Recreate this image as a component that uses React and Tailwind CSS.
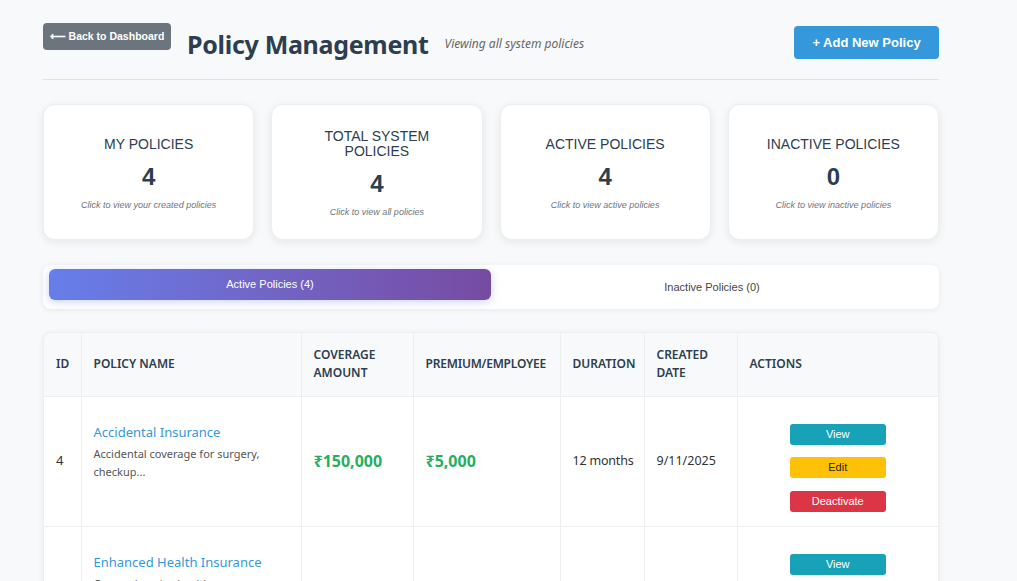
const segoe = { fontFamily: '"Noto Sans", "Open Sans", sans-serif' };

const stats = [
  { label: "MY POLICIES", value: 4, hint: "Click to view your created policies" },
  { label: "TOTAL SYSTEM POLICIES", value: 4, hint: "Click to view all policies" },
  { label: "ACTIVE POLICIES", value: 4, hint: "Click to view active policies" },
  { label: "INACTIVE POLICIES", value: 0, hint: "Click to view inactive policies" },
];

const policies = [
  {
    id: 4,
    name: "Accidental Insurance",
    desc: "Accidental coverage for surgery, checkup...",
    coverage: "₹150,000",
    premium: "₹5,000",
    duration: "12 months",
    created: "9/11/2025",
  },
  {
    id: 3,
    name: "Enhanced Health Insurance",
    desc: "Comprehensive health coverage for employees...",
    coverage: "₹300,000",
    premium: "₹8,000",
    duration: "12 months",
    created: "9/11/2025",
  },
];

export default function App() {
  return (
    <div className="min-h-screen bg-[#f8f9fa] font-['Liberation_Sans',Arial,sans-serif]">
      <div className="w-[896px] ml-[43px] pt-[23px]">
        {/* HEADER */}
        <div className="flex h-[57px] items-start justify-between border-b border-[#dee2e6]">
          <div className="flex h-[42px] items-center">
            <button className="h-[27px] w-[128px] self-start rounded bg-[#6c757d] text-[10.5px] font-semibold text-white">
              ⟵ Back to Dashboard
            </button>
            <h1 style={segoe} className="ml-4 text-[25px] font-bold leading-none tracking-[-0.3px] text-[#2c3e50]">
              Policy Management
            </h1>
            <span style={segoe} className="ml-4 text-[12px] italic text-[#666]">
              Viewing all system policies
            </span>
          </div>
          <button className="mt-[3px] h-[33px] w-[145px] rounded bg-[#3498db] text-[13px] font-bold text-white">
            + Add New Policy
          </button>
        </div>

        {/* STAT CARDS */}
        <div className="mt-[24px] grid grid-cols-4 gap-[17px]">
          {stats.map((s) => (
            <div
              key={s.label}
              className="flex h-[136px] flex-col items-center justify-center rounded-xl border border-[#eceef0] bg-white px-8 pt-[5px] text-center shadow-[0_2px_10px_rgba(0,0,0,0.08)]"
            >
              <div className="text-[14px] leading-[15px] text-[#2c3e50]">{s.label}</div>
              <div className="mt-[13px] text-[24px] font-bold leading-none text-[#2c3e50]">{s.value}</div>
              <div className="mt-[10px] text-[9px] italic text-[#6c757d]">{s.hint}</div>
            </div>
          ))}
        </div>

        {/* TABS */}
        <div className="mt-[25px] flex h-[44px] items-start rounded-lg bg-white p-[4px] px-[6px] shadow-[0_1px_6px_rgba(0,0,0,0.07)]">
          <div className="flex h-[31px] flex-1 items-center justify-center rounded-md bg-gradient-to-r from-[#667eea] to-[#764ba2] text-[11px] font-medium text-white shadow-[0_2px_8px_rgba(102,126,234,0.35)]">
            Active Policies (4)
          </div>
          <div className="flex h-[36px] flex-1 items-center justify-center text-[11px] text-[#444]">
            Inactive Policies (0)
          </div>
        </div>

        {/* TABLE */}
        <div className="mt-[23px] overflow-hidden rounded-t-lg border border-[#eceef0] bg-white shadow-[0_1px_6px_rgba(0,0,0,0.06)]">
          <table style={segoe} className="w-full table-fixed border-collapse text-left">
            <colgroup>
              <col className="w-[37px]" />
              <col className="w-[220px]" />
              <col className="w-[112px]" />
              <col className="w-[147px]" />
              <col className="w-[84px]" />
              <col className="w-[93px]" />
              <col />
            </colgroup>
            <thead>
              <tr className="h-[63px] bg-[#f8f9fa] text-[12px] uppercase leading-[18px] text-[#2c3e50]">
                <th className="border-b border-r border-[#eceef0] px-3 font-semibold">ID</th>
                <th className="border-b border-r border-[#eceef0] px-3 font-semibold">Policy Name</th>
                <th className="border-b border-r border-[#eceef0] px-3 font-semibold">Coverage Amount</th>
                <th className="border-b border-r border-[#eceef0] px-3 font-semibold tracking-[-0.2px]">Premium/Employee</th>
                <th className="border-b border-r border-[#eceef0] px-3 font-semibold">Duration</th>
                <th className="border-b border-r border-[#eceef0] px-3 font-semibold">Created Date</th>
                <th className="border-b border-[#eceef0] px-3 font-semibold">Actions</th>
              </tr>
            </thead>
            <tbody>
              {policies.map((p) => (
                <tr key={p.id} className="h-[130px] text-[13px] text-[#333]">
                  <td className="border-b border-r border-[#eceef0] px-3">{p.id}</td>
                  <td className="border-b border-r border-[#eceef0] px-3 pb-[18px]">
                    <div className="text-[13px] leading-[18px] text-[#3498db]">{p.name}</div>
                    <div className="mt-[4px] pr-6 text-[11px] leading-[18px] text-[#555]">{p.desc}</div>
                  </td>
                  <td className="border-b border-r border-[#eceef0] px-3 text-[16px] font-bold text-[#27ae60]">{p.coverage}</td>
                  <td className="border-b border-r border-[#eceef0] px-3 text-[16px] font-bold text-[#27ae60]">{p.premium}</td>
                  <td className="whitespace-nowrap border-b border-r border-[#eceef0] px-3 text-[12.5px] tracking-[-0.2px]">{p.duration}</td>
                  <td className="border-b border-r border-[#eceef0] px-3 text-[12.5px]">{p.created}</td>
                  <td className="border-b border-[#eceef0] px-3 pt-[14px]">
                    <div className="flex flex-col items-center gap-3 font-['Liberation_Sans',Arial,sans-serif] text-[11px] font-medium">
                      <button className="h-[21px] w-[96px] rounded-[3px] bg-[#17a2b8] text-white">View</button>
                      <button className="h-[21px] w-[96px] rounded-[3px] bg-[#ffc107] text-[#212529]">Edit</button>
                      <button className="mt-px h-[21px] w-[96px] rounded-[3px] bg-[#dc3545] text-white">Deactivate</button>
                    </div>
                  </td>
                </tr>
              ))}
            </tbody>
          </table>
        </div>
      </div>
    </div>
  );
}
